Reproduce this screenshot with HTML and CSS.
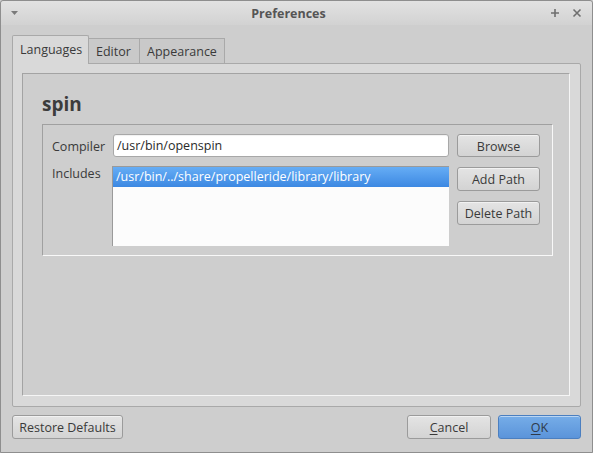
FILE: index.html
```html
<!DOCTYPE html>
<html>
<head>
<meta charset="utf-8">
<link rel="stylesheet" href="styles.css">
</head>
<body>
<div class="window">
  <div class="titlebar">
    <svg class="menu-icon" width="8" height="5" viewBox="0 0 8 5"><path d="M0 0 H7 L3.5 4 Z" fill="#7a7a7a"/></svg>
    <div class="title">Preferences</div>
    <svg class="tb-icon" width="10" height="10" viewBox="0 0 10 10"><path d="M5 1 V9 M1 5 H9" stroke="#6f6f6f" stroke-width="1.6"/></svg>
    <svg class="tb-icon" width="10" height="10" viewBox="0 0 10 10"><path d="M1.5 1.5 L8.5 8.5 M8.5 1.5 L1.5 8.5" stroke="#6f6f6f" stroke-width="1.6"/></svg>
  </div>
  <div class="body">
    <div class="tabs">
      <div class="tab active">Languages</div>
      <div class="tab">Editor</div>
      <div class="tab">Appearance</div>
    </div>
    <div class="pane">
      <div class="inner">
        <div class="heading">spin</div>
        <div class="group">
          <div class="label label-mid">Compiler</div>
          <div class="input">/usr/bin/openspin</div>
          <button class="btn side-btn">Browse</button>
          <div class="label label-top">Includes</div>
          <div class="list">
            <div class="list-row selected">/usr/bin/../share/propelleride/library/library</div>
          </div>
          <div class="side-col">
            <button class="btn side-btn">Add Path</button>
            <button class="btn side-btn">Delete Path</button>
          </div>
        </div>
      </div>
    </div>
    <div class="footer">
      <button class="btn restore">Restore Defaults</button>
      <div class="spacer"></div>
      <button class="btn dlg"><u>C</u>ancel</button>
      <button class="btn dlg primary"><u>O</u>K</button>
    </div>
  </div>
</div>
</body>
</html>
```
FILE: styles.css
```css
* { box-sizing: border-box; }
html, body { margin: 0; padding: 0; }
body {
  width: 593px;
  height: 453px;
  font-family: "Open Sans", "Noto Sans", sans-serif;
  font-size: 12.5px;
  color: #3a3a3a;
  background: #cecece;
}
.window {
  width: 593px;
  height: 453px;
  border: 1px solid #8e8e8e;
  border-radius: 3px 3px 0 0;
  background: #cecece;
  display: flex;
  flex-direction: column;
}
.titlebar {
  height: 24px;
  display: flex;
  align-items: center;
  padding: 0 10px 0 10px;
  background: linear-gradient(#e2e2e2, #d2d2d2);
  border-radius: 3px 3px 0 0;
}
.menu-icon { margin-top: 1px; }
.title {
  flex: 1;
  text-align: center;
  font-weight: bold;
  font-size: 12.5px;
  color: #555;
  padding-left: 20px;
}
.tb-icon { margin-left: 12px; }
.body {
  flex: 1;
  display: flex;
  flex-direction: column;
  padding: 11px 10px 0 11px;
}
.tabs {
  display: flex;
  align-items: flex-end;
  height: 28px;
  position: relative;
  z-index: 1;
  margin-bottom: -1px;
}
.tab {
  height: 26px;
  padding: 0 7px;
  line-height: 25px;
  border: 1px solid #a9a9a9;
  border-left: none;
  border-bottom: 1px solid #a9a9a9;
  background: #c9c9c9;
  color: #3a3a3a;
}
.tab.active {
  height: 29px;
  padding: 0 7px;
  border-left: 1px solid #a9a9a9;
  border-bottom: none;
  border-radius: 2px 2px 0 0;
  background: #d9d9d9;
  line-height: 27px;
  width: 77px;
}
.tab:nth-child(2) { width: 51px; }
.tab:nth-child(3) { width: 85px; }
.pane {
  width: 569px;
  height: 344px;
  border: 1px solid #a9a9a9;
  border-radius: 0 2px 2px 2px;
  background: #d9d9d9;
  padding: 9px 10px 10px 9px;
  display: flex;
}
.inner {
  flex: 1;
  border-top: 1px solid #a3a3a3;
  border-left: 1px solid #a3a3a3;
  border-right: 1px solid #f5f5f5;
  border-bottom: 1px solid #f5f5f5;
  background: #cecece;
  padding: 18px 0 0 19px;
}
.heading {
  font-size: 19px;
  font-weight: bold;
  color: #3c3c3c;
  height: 24px;
  line-height: 24px;
  margin-bottom: 8px;
}
.group {
  width: 511px;
  height: 132px;
  border-top: 1px solid #a0a0a0;
  border-left: 1px solid #a0a0a0;
  border-right: 1px solid #f8f8f8;
  border-bottom: 1px solid #f8f8f8;
  padding: 9px 11px 9px 9px;
  display: grid;
  grid-template-columns: 60px 337px 83px;
  grid-template-rows: 23px 80px;
  column-gap: 0;
  row-gap: 9px;
}
.label { color: #3a3a3a; }
.label-mid { align-self: center; padding-top: 1px; }
.label-top { margin-top: -1px; }
.input {
  margin-left: 1px;
  background: #fff;
  border: 1px solid #a8a8a8;
  border-radius: 3px;
  padding: 0 3px;
  line-height: 22px;
  color: #2a2a2a;
  box-shadow: inset 0 1px 1px rgba(0,0,0,0.06);
}
.btn {
  font-family: inherit;
  font-size: 12.5px;
  color: #3a3a3a;
  border: 1px solid #9b9b9b;
  border-radius: 3px;
  background: linear-gradient(#e4e4e4, #d3d3d3);
  box-shadow: inset 0 1px 0 rgba(255,255,255,0.5);
  padding: 0;
  padding-top: 1px;
  height: 24px;
  line-height: 21px;
  margin: 0;
}
.side-btn { width: 83px; }
.group > .side-btn { margin-left: 8px; height: 23px; width: 83px; }
.list {
  background: #fcfcfc;
  border-top: 1px solid #9a9a9a;
  border-left: 1px solid #9a9a9a;
}
.list-row {
  height: 20px;
  line-height: 20px;
  padding: 0 3px;
}
.list-row.selected {
  background: linear-gradient(#66adf5, #3c88e2);
  color: #fff;
}
.side-col {
  margin-left: 8px;
  padding-top: 1px;
  display: flex;
  flex-direction: column;
  gap: 10px;
}
.side-col .btn { height: 24px; }
.footer {
  display: flex;
  margin-top: 8px;
  padding-right: 1px;
  gap: 7px;
}
.spacer { flex: 1; }
.restore { width: 111px; }
.dlg { width: 84px; }
.primary {
  width: 83px;
  background: linear-gradient(#76ade8, #5b94da);
  border-color: #4b7fc0;
  color: #2f3a4a;
}
u { text-decoration-thickness: 1px; text-underline-offset: 2px; }
```
